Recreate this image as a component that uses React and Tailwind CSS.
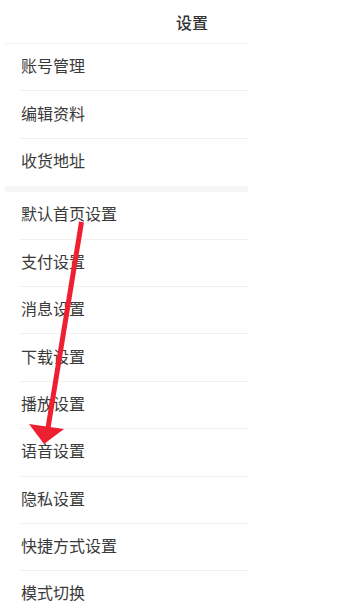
import React from "react";

const sec1 = ["账号管理", "编辑资料", "收货地址"];
const sec2 = [
  "默认首页设置",
  "支付设置",
  "消息设置",
  "下载设置",
  "播放设置",
  "语音设置",
  "隐私设置",
  "快捷方式设置",
  "模式切换",
];

function Row({ label, last }) {
  return (
    <div className="relative flex h-[47.4px] items-center pb-[5px] pl-4">
      <span className="text-[16px] leading-none text-[#3a3a3a]">{label}</span>
      {!last && (
        <div className="absolute bottom-0 left-[15px] right-0 h-px bg-[#f1f1f1]" />
      )}
    </div>
  );
}

export default function App() {
  return (
    <div
      className="relative h-[614px] w-[356px] overflow-hidden bg-white"
      style={{ fontFamily: '"Noto Sans CJK SC", "Noto Sans", sans-serif' }}
    >
      <div className="flex h-[43px] items-center justify-center pl-[28px]">
        <span className="text-[16px] font-medium text-[#333]">设置</span>
      </div>
      <div className="ml-[5px] w-[243px] border-t border-[#f3f3f3]">
        {sec1.map((l, i) => (
          <Row key={l} label={l} last={i === sec1.length - 1} />
        ))}
        <div className="h-[6px] bg-[#f5f5f5]" />
        {sec2.map((l, i) => (
          <Row key={l} label={l} last={i === sec2.length - 1} />
        ))}
      </div>
      <svg
        className="pointer-events-none absolute left-0 top-0"
        width="356"
        height="614"
        viewBox="0 0 356 614"
      >
        <line
          x1="81.5"
          y1="222"
          x2="48"
          y2="428"
          stroke="#ee1f31"
          strokeWidth="5"
        />
        <polygon points="29,424 64,429 44,444" fill="#ee1f31" />
      </svg>
    </div>
  );
}
